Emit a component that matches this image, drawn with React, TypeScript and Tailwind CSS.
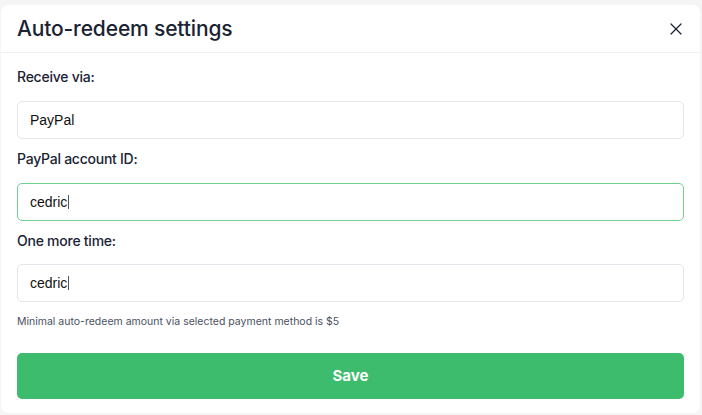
import { X } from "lucide-react";

const labelCls = "block text-[14px] leading-[20px] font-medium tracking-[-0.25px] text-[#1b2333]";
const inputCls =
    "h-[38px] w-full rounded-[5px] border bg-white px-[12px] flex items-center text-[14px] text-[#111] font-['Liberation_Sans',Arial,sans-serif]";

function Field(props: { label: string; value: string; focused?: boolean; caret?: boolean; gapClass: string }) {
    return (
        <div className="flex flex-col">
            <span className={labelCls}>{props.label}</span>
            <div
                className={
                    inputCls +
                    " " +
                    props.gapClass +
                    (props.focused ? " border-[#6fd08f]" : " border-[#e3e6ea]")
                }
            >
                <span>{props.value}</span>
                {props.caret && <span className="ml-[1px] inline-block h-[14px] w-[1px] bg-[#555]" />}
            </div>
        </div>
    );
}

export default function App() {
    return (
        <div className="h-[415px] w-[702px] overflow-hidden bg-[#f5f5f6] pt-[5px] pl-[1px] pr-[2px] font-['Inter',sans-serif]">
            <div className="h-[408px] rounded-[7px] bg-white">
                <div className="flex h-[48px] items-center justify-between border-b border-[#f0f1f2] pl-[16px] pr-[14px]">
                    <h1 className="text-[21px] font-medium tracking-[-0.15px] text-[#1b2333]">Auto-redeem settings</h1>
                    <X className="h-[20px] w-[20px] text-[#1b2333]" strokeWidth={1.5} />
                </div>
                <div className="flex flex-col px-[16px] pt-[14px]">
                    <Field label="Receive via:" value="PayPal" gapClass="mt-[14px]" />
                    <div className="h-[10px]" />
                    <Field label="PayPal account ID:" value="cedric" caret focused gapClass="mt-[14px]" />
                    <div className="h-[10px]" />
                    <Field label="One more time:" value="cedric" caret gapClass="mt-[13px]" />
                    <p className="mt-[12px] text-[10.5px] leading-[16px] text-[#4a5160]">
                        Minimal auto-redeem amount via selected payment method is $5
                    </p>
                    <button className="mt-[23px] h-[46px] w-full rounded-[5px] bg-[#3dbc6e] text-[15px] font-bold text-white">
                        Save
                    </button>
                </div>
            </div>
        </div>
    );
}
